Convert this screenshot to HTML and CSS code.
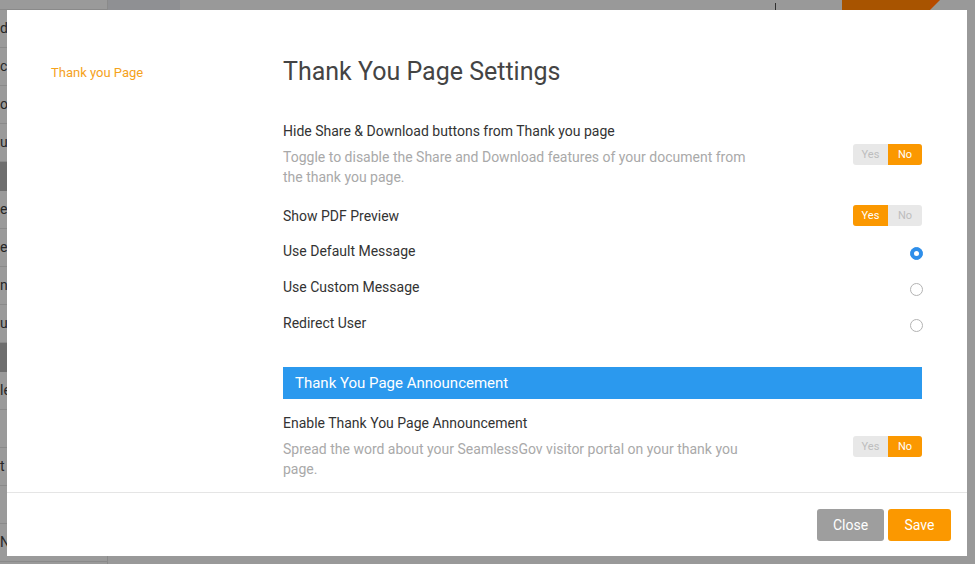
FILE: index.html
```html
<!DOCTYPE html>
<html lang="en">
<head>
    <meta charset="UTF-8">
    <meta name="viewport" content="width=device-width, initial-scale=1.0">
    <title>Thank You Page Settings</title>
    <link rel="stylesheet" href="styles.css">
</head>
<body>

<div class="app">
    <aside class="sidebar">
        <div class="sidebar-top"></div>
        <div class="side-item">d</div>
        <div class="side-item">c</div>
        <div class="side-item">ox</div>
        <div class="side-item">ut</div>
        <div class="side-section"></div>
        <div class="side-item">e</div>
        <div class="side-item">e</div>
        <div class="side-item">n</div>
        <div class="side-item">u</div>
        <div class="side-section"></div>
        <div class="side-item">le</div>
        <div class="side-item"></div>
        <div class="side-item">t</div>
        <div class="side-item"></div>
        <div class="side-item">N</div>
    </aside>
    <div class="app-main">
        <header class="topbar">
            <div class="topbar-tab"></div>
            <div class="topbar-fill">
                <span class="topbar-divider"></span>
                <span class="topbar-logo"></span>
            </div>
        </header>
    </div>
</div>

<div class="modal">
    <div class="modal-body">
        <nav class="modal-nav">
            <a href="#" class="nav-link active">Thank you Page</a>
        </nav>

        <div class="modal-content">
            <h1>Thank You Page Settings</h1>

            <div class="setting with-desc">
                <div class="setting-text">
                    <p class="setting-title">Hide Share &amp; Download buttons from Thank you page</p>
                    <p class="setting-desc">Toggle to disable the Share and Download features of your document from the thank you page.</p>
                </div>
                <div class="toggle">
                    <span>Yes</span>
                    <span class="on">No</span>
                </div>
            </div>

            <div class="setting toggle-row">
                <p class="setting-title">Show PDF Preview</p>
                <div class="toggle">
                    <span class="on">Yes</span>
                    <span>No</span>
                </div>
            </div>

            <div class="setting">
                <p class="setting-title">Use Default Message</p>
                <span class="radio checked"></span>
            </div>

            <div class="setting">
                <p class="setting-title">Use Custom Message</p>
                <span class="radio"></span>
            </div>

            <div class="setting">
                <p class="setting-title">Redirect User</p>
                <span class="radio"></span>
            </div>

            <div class="section-bar">Thank You Page Announcement</div>

            <div class="setting with-desc">
                <div class="setting-text">
                    <p class="setting-title">Enable Thank You Page Announcement</p>
                    <p class="setting-desc">Spread the word about your SeamlessGov visitor portal on your thank you page.</p>
                </div>
                <div class="toggle">
                    <span>Yes</span>
                    <span class="on">No</span>
                </div>
            </div>
        </div>
    </div>

    <div class="modal-footer">
        <button class="btn btn-close">Close</button>
        <button class="btn btn-save">Save</button>
    </div>
</div>

</body>
</html>
```

FILE: styles.css
```css
/* General Styling */
* {
    box-sizing: border-box;
    margin: 0;
    padding: 0;
}

body {
    font-family: Roboto, "Liberation Sans", Arial, sans-serif;
    background: #999999;
    height: 100vh;
    overflow: hidden;
}

/* Background app (dimmed) */
.app {
    display: flex;
    height: 100vh;
}

.sidebar {
    width: 108px;
    background: #9a9a9a;
    border-right: 1px solid #8a8a8a;
    font-size: 14px;
    color: #262626;
}

.sidebar-top {
    height: 10px;
    border-bottom: 1px solid #8a8a8a;
}

.side-item {
    height: 38px;
    line-height: 37px;
    border-bottom: 1px solid #8a8a8a;
    white-space: nowrap;
}

.side-section {
    height: 29px;
    background: #6e6e6e;
}

.app-main {
    flex: 1;
}

.topbar {
    display: flex;
    height: 50px;
}

.topbar-tab {
    width: 72px;
    background: #8f9093;
}

.topbar-fill {
    flex: 1;
    position: relative;
}

.topbar-divider {
    position: absolute;
    left: 595px;
    top: 3px;
    width: 1px;
    height: 30px;
    background: #2f2f2f;
}

.topbar-logo {
    position: absolute;
    left: 662px;
    top: 0;
    width: 88px;
    height: 40px;
    background: #a85400;
}

.topbar-logo::after {
    content: "";
    position: absolute;
    right: -10px;
    top: 0;
    border-left: 10px solid #b64a00;
    border-bottom: 10px solid transparent;
}

/* Modal */
.modal {
    position: fixed;
    left: 7px;
    top: 10px;
    width: 960px;
    height: 546px;
    background: #fff;
    display: flex;
    flex-direction: column;
}

.modal-body {
    flex: 1;
    display: flex;
    overflow: hidden;
}

.modal-nav {
    width: 276px;
    padding: 52px 0 0 44px;
}

.nav-link {
    font-size: 13px;
    line-height: 18px;
    color: #f5a21b;
    text-decoration: none;
}

.modal-content {
    flex: 1;
    padding: 47px 44px 0 0;
}

h1 {
    font-size: 25px;
    font-weight: 400;
    line-height: 30px;
    color: #444;
    margin-bottom: 25px;
}

.setting {
    display: flex;
    align-items: center;
    justify-content: space-between;
    min-height: 36px;
}

.setting.with-desc {
    padding: 9px 0 11px;
}

.setting.toggle-row {
    min-height: 35px;
}

.setting-title {
    font-size: 14px;
    line-height: 20px;
    color: #333;
}

.setting-desc {
    max-width: 470px;
    margin-top: 6px;
    font-size: 14px;
    line-height: 20px;
    color: #a9a9a9;
}

.toggle {
    display: flex;
    height: 21px;
    margin-right: 1px;
    border-radius: 3px;
    overflow: hidden;
    font-size: 11px;
    line-height: 21px;
    background: #e8e8e8;
    color: #bdbdbd;
}

.toggle span {
    width: 35px;
    text-align: center;
}

.toggle span + span {
    width: 34px;
}

.toggle .on {
    background: #fb9800;
    color: #fff;
}

.radio {
    width: 13px;
    height: 13px;
    margin: 4px 0 0;
    border: 1px solid #b3b3b3;
    border-radius: 50%;
    background: #fff;
}

.radio.checked {
    border-color: #2d8eea;
    background: #2d8eea;
    display: flex;
    align-items: center;
    justify-content: center;
}

.radio.checked::after {
    content: "";
    width: 5px;
    height: 5px;
    border-radius: 50%;
    background: #fff;
}

.section-bar {
    margin: 26px 1px 5px 0;
    height: 32px;
    line-height: 32px;
    padding-left: 12px;
    background: #2b99ee;
    color: #fff;
    font-size: 15px;
}

/* Footer */
.modal-footer {
    height: 64px;
    border-top: 1px solid #e5e5e5;
    display: flex;
    justify-content: flex-end;
    align-items: flex-start;
    gap: 4px;
    padding: 16px 16px 0 0;
}

.btn {
    height: 32px;
    border: none;
    border-radius: 3px;
    color: #fff;
    font-family: inherit;
    font-size: 14px;
    cursor: pointer;
}

.btn-close {
    width: 67px;
    background: #9e9e9e;
}

.btn-save {
    width: 63px;
    background: #fb9800;
}
```
